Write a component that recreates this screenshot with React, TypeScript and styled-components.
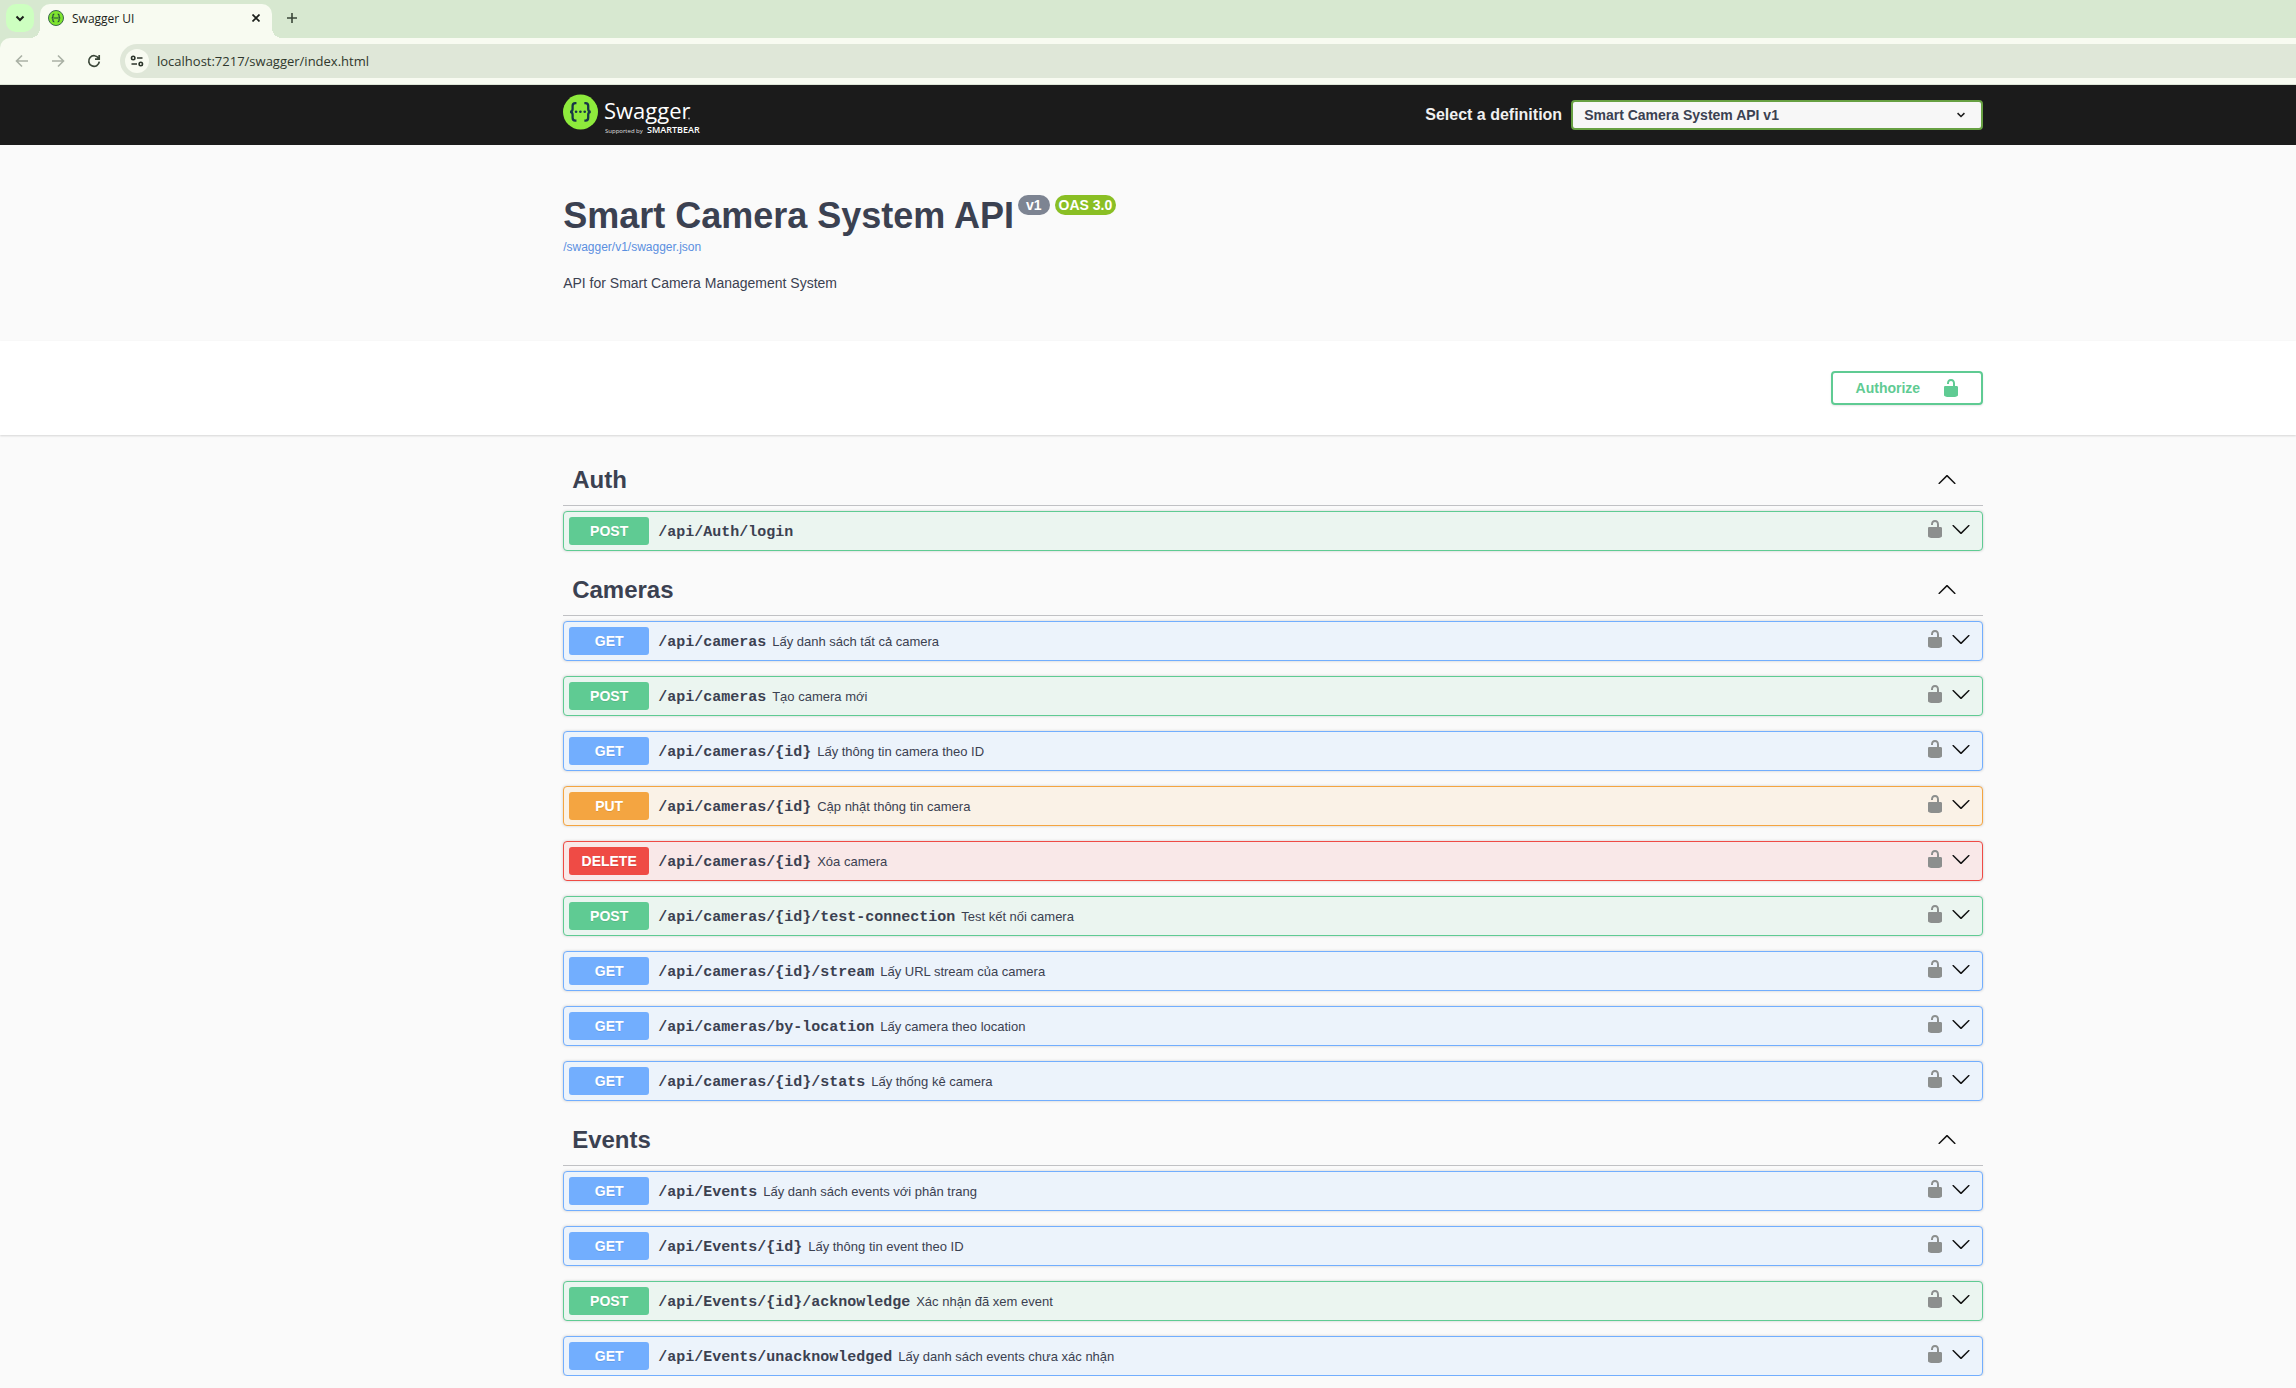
import React, { useState } from "react";
import styled, { createGlobalStyle } from "styled-components";

const GlobalStyle = createGlobalStyle`
  *, *::before, *::after { box-sizing: border-box; }
  body {
    margin: 0;
    background: #fafafa;
    color: #3b4151;
    font-family: "Liberation Sans", Arial, sans-serif;
  }
  button { font: inherit; color: inherit; background: none; border: 0; padding: 0; cursor: pointer; }
  svg { display: block; flex: none; }
  h1, h2, p { margin: 0; }
`;

/* ---------- browser frame ---------- */

const chrome = {
  strip: "#d7e8d0",
  surface: "#f8fbf1",
  field: "#dfe7d8",
  ink: "#1b1f1a",
};

const TabStrip = styled.div`
  display: flex;
  align-items: flex-start;
  height: 38px;
  padding: 4px 6px 0;
  background: ${chrome.strip};
  font-family: "Open Sans", "Noto Sans", sans-serif;
`;

const TabSearch = styled.button`
  display: grid;
  place-items: center;
  width: 28px;
  height: 28px;
  margin-right: 6px;
  border-radius: 10px;
  background: #cdffc0;
`;

const Tab = styled.div`
  position: relative;
  display: flex;
  align-items: center;
  width: 232px;
  height: 34px;
  padding: 0 12px 6px 8px;
  border-radius: 10px 10px 0 0;
  background: ${chrome.surface};
  color: ${chrome.ink};
  font-size: 12px;
  line-height: 16px;

  &::before,
  &::after {
    content: "";
    position: absolute;
    bottom: 0;
    width: 10px;
    height: 10px;
  }
  &::before {
    left: -10px;
    background: radial-gradient(circle at 0 0, transparent 10px, ${chrome.surface} 10px);
  }
  &::after {
    right: -10px;
    background: radial-gradient(circle at 100% 0, transparent 10px, ${chrome.surface} 10px);
  }
`;

const TabTitle = styled.span`
  flex: 1;
  padding: 2px 0 0 8px;
`;

const NewTab = styled.button`
  display: grid;
  place-items: center;
  width: 28px;
  height: 28px;
  margin-left: 6px;
`;

const ToolbarWrap = styled.div`
  background: ${chrome.strip};
`;

const Toolbar = styled.div`
  display: flex;
  align-items: center;
  height: 47px;
  padding: 0 0 1px 8px;
  border-bottom: 1px solid #dde5d6;
  border-radius: 10px 0 0 0;
  background: ${chrome.surface};
`;

const NavButton = styled.button<{ $dim?: boolean }>`
  display: grid;
  place-items: center;
  width: 28px;
  height: 28px;
  margin-right: 8px;
  color: ${(p) => (p.$dim ? "#aab1a5" : "#3a4638")};
`;

const AddressBar = styled.label`
  display: flex;
  flex: 1;
  align-items: center;
  height: 34px;
  margin-left: 4px;
  padding-left: 5px;
  border-radius: 17px 0 0 17px;
  background: ${chrome.field};
`;

const SiteInfo = styled.span`
  display: grid;
  place-items: center;
  width: 24px;
  height: 24px;
  margin-right: 8px;
  border-radius: 50%;
  background: ${chrome.surface};
`;

const AddressInput = styled.input`
  flex: 1;
  min-width: 0;
  padding: 0;
  border: 0;
  outline: 0;
  background: none;
  color: #2f382d;
  font: 13px/20px "Open Sans", "Noto Sans", sans-serif;
`;

/* ---------- page ---------- */

const Columns = styled.div`
  display: grid;
  grid-template-columns: minmax(20px, 9fr) minmax(0, 1420px) minmax(20px, 5fr);
  & > * { grid-column: 2; }
`;

const Topbar = styled(Columns)`
  background: #1b1b1b;
`;

const TopbarInner = styled.div`
  display: flex;
  align-items: center;
  justify-content: space-between;
  height: 60px;
`;

const LogoLink = styled.a`
  display: block;
`;

const DefinitionLabel = styled.label`
  display: flex;
  align-items: center;
  gap: 9px;
  color: #f0f0f0;
  font-size: 16px;
  font-weight: 700;
`;

const SelectBox = styled.span`
  position: relative;
  display: block;
  width: 412px;

  svg {
    position: absolute;
    top: 10px;
    right: 17px;
    pointer-events: none;
  }
`;

const Select = styled.select`
  display: block;
  width: 100%;
  height: 30px;
  padding: 0 40px 0 11px;
  border: 2px solid #67a042;
  border-radius: 4px;
  background: #f7f7f7;
  color: #3b4151;
  font: 700 14px/16px "Liberation Sans", Arial, sans-serif;
  appearance: none;
`;

const InfoInner = styled.header`
  padding: 50px 0;
`;

const TitleRow = styled.div`
  display: flex;
  align-items: flex-start;
`;

const Title = styled.h1`
  margin-right: 4px;
  font-size: 36px;
  line-height: 41px;
  font-weight: 700;
`;

const Badge = styled.span<{ $green?: boolean }>`
  height: 20px;
  margin-right: 5px;
  padding: 0 ${(p) => (p.$green ? 4 : 8)}px;
  border-radius: 10px;
  background: ${(p) => (p.$green ? "#8abf24" : "#7d8492")};
  color: #fff;
  font-size: 14px;
  line-height: 20px;
  font-weight: 700;
`;

const SpecLink = styled.a`
  display: block;
  margin-top: 4px;
  color: #5a8fe0;
  font-size: 12px;
  line-height: 14px;
  text-decoration: none;
`;

const Description = styled.p`
  margin-top: 21px;
  font-size: 14px;
  line-height: 16px;
`;

const Schemes = styled(Columns)`
  background: #fff;
  box-shadow: 0 1px 2px rgba(0, 0, 0, 0.15);
`;

const SchemesInner = styled.div`
  display: flex;
  justify-content: flex-end;
  padding: 30px 0;
`;

const Authorize = styled.button`
  display: flex;
  align-items: center;
  gap: 21px;
  height: 34px;
  padding: 0 20px 0 23px;
  border: 2px solid #5fcb93;
  border-radius: 4px;
  box-shadow: 0 1px 2px rgba(0, 0, 0, 0.1);
  color: #5fcb93;
  font-size: 14px;
  line-height: 16px;
  font-weight: 700;
`;

const Sections = styled.main`
  display: flex;
  flex-direction: column;
  gap: 15px;
  padding-top: 21px;
`;

const SectionHead = styled.button`
  display: flex;
  align-items: center;
  justify-content: space-between;
  width: 100%;
  height: 50px;
  margin-bottom: 5px;
  padding: 0 26px 2px 9px;
  border-bottom: 1px solid #c0c1c4;
  text-align: left;

  svg { margin-bottom: 2px; }
`;

const SectionTitle = styled.h2`
  font-size: 24px;
  line-height: 28px;
  font-weight: 700;
`;

const Operations = styled.div`
  display: flex;
  flex-direction: column;
  gap: 15px;
`;

const palette = {
  GET: { solid: "#72aefe", tint: "#ecf3fb" },
  POST: { solid: "#5fcb93", tint: "#ebf5f0" },
  PUT: { solid: "#f4a541", tint: "#faf2e7" },
  DELETE: { solid: "#ef4b45", tint: "#f9e8e8" },
};
type Method = keyof typeof palette;

const Operation = styled.div<{ $method: Method }>`
  display: flex;
  align-items: center;
  height: 40px;
  padding: 0 11px 0 5px;
  border: 1px solid ${(p) => palette[p.$method].solid};
  border-radius: 4px;
  background: ${(p) => palette[p.$method].tint};
  box-shadow: 0 0 3px rgba(0, 0, 0, 0.19);
`;

const Summary = styled.button`
  display: flex;
  flex: 1;
  align-items: center;
  min-width: 0;
  text-align: left;
`;

const MethodTag = styled.span<{ $method: Method }>`
  width: 80px;
  border-radius: 3px;
  background: ${(p) => palette[p.$method].solid};
  color: #fff;
  font-size: 14px;
  line-height: 28px;
  font-weight: 700;
  text-align: center;
  text-shadow: 0 1px 0 rgba(0, 0, 0, 0.1);
`;

const Path = styled.span`
  padding: 4px 6px 0 9px;
  font-family: "Liberation Mono", monospace;
  font-size: 15px;
  line-height: 18px;
  font-weight: 700;
`;

const Note = styled.span`
  padding-top: 2px;
  font-size: 13px;
  line-height: 16px;
`;

const IconButton = styled.button<{ $lock?: boolean }>`
  margin: 0 ${(p) => (p.$lock ? 6 : 0)}px 5px 0;
  color: ${(p) => (p.$lock ? "#8c8f8e" : "#111")};
`;

const sections: { name: string; operations: [Method, string, string][] }[] = [
  { name: "Auth", operations: [["POST", "/api/Auth/login", ""]] },
  {
    name: "Cameras",
    operations: [
      ["GET", "/api/cameras", "Lấy danh sách tất cả camera"],
      ["POST", "/api/cameras", "Tạo camera mới"],
      ["GET", "/api/cameras/{id}", "Lấy thông tin camera theo ID"],
      ["PUT", "/api/cameras/{id}", "Cập nhật thông tin camera"],
      ["DELETE", "/api/cameras/{id}", "Xóa camera"],
      ["POST", "/api/cameras/{id}/test-connection", "Test kết nối camera"],
      ["GET", "/api/cameras/{id}/stream", "Lấy URL stream của camera"],
      ["GET", "/api/cameras/by-location", "Lấy camera theo location"],
      ["GET", "/api/cameras/{id}/stats", "Lấy thống kê camera"],
    ],
  },
  {
    name: "Events",
    operations: [
      ["GET", "/api/Events", "Lấy danh sách events với phân trang"],
      ["GET", "/api/Events/{id}", "Lấy thông tin event theo ID"],
      ["POST", "/api/Events/{id}/acknowledge", "Xác nhận đã xem event"],
      ["GET", "/api/Events/unacknowledged", "Lấy danh sách events chưa xác nhận"],
    ],
  },
];

const Unlocked = () => (
  <svg width="20" height="20" viewBox="0 0 20 20" fill="currentColor" aria-hidden="true">
    <path d="M15.8 8H14V5.6C14 2.703 12.665 1 10 1 7.334 1 6 2.703 6 5.6V6h2v-.801C8 3.754 8.797 3 10 3c1.203 0 2 .754 2 2.199V8H4c-.553 0-1 .646-1 1.199V17c0 .549.428 1.139.951 1.307l1.197.387C5.672 18.861 6.55 19 7.1 19h5.8c.549 0 1.428-.139 1.951-.307l1.196-.387c.524-.167.953-.757.953-1.306V9.199C17 8.646 16.352 8 15.8 8z" />
  </svg>
);

const ArrowDown = () => (
  <svg width="20" height="20" viewBox="0 0 20 20" fill="currentColor" aria-hidden="true">
    <path d="M17.418 6.109c.272-.268.709-.268.979 0s.271.701 0 .969l-7.908 7.83c-.27.268-.707.268-.979 0l-7.908-7.83c-.27-.268-.27-.701 0-.969.271-.268.709-.268.979 0L10 13.25l7.418-7.141z" />
  </svg>
);

const ArrowUp = () => (
  <svg width="20" height="20" viewBox="0 0 20 20" fill="#111" aria-hidden="true">
    <path d="M17.418 14.908c.272.268.709.268.979 0s.271-.701 0-.969l-7.908-7.83c-.27-.268-.707-.268-.979 0l-7.908 7.83c-.27.268-.27.701 0 .969.271.268.709.268.979 0L10 7.767l7.418 7.141z" />
  </svg>
);

const Braces = () => (
  <>
    <path
      d="M14.2 10.2h-1c-1.600 0-2.200.9-2.200 2.300v2.600c0 1.500-.7 2.200-2 2.400 1.300.2 2 .9 2 2.400v2.600c0 1.400.6 2.300 2.200 2.300h1M20.800 10.200h1c1.600 0 2.200.9 2.200 2.300v2.600c0 1.500.7 2.200 2 2.400-1.300.2-2 .9-2 2.400v2.600c0 1.400-.6 2.300-2.200 2.300h-1"
      fill="none"
      stroke="#173647"
      strokeWidth="1.900"
    />
    <circle cx="13.900" cy="17.500" r="1.100" fill="#173647" />
    <circle cx="17.500" cy="17.500" r="1.100" fill="#173647" />
    <circle cx="21.100" cy="17.500" r="1.100" fill="#173647" />
  </>
);

const Logo = () => (
  <svg width="145" height="42" viewBox="0 0 145 42" role="img" aria-label="Swagger, supported by SmartBear">
    <circle cx="17.500" cy="18" r="17.500" fill="#8eea3c" />
    <g transform="translate(-3.600 -3.200) scale(1.200)"><Braces /></g>
    <g fill="#fff" fontFamily="'Open Sans', 'Noto Sans', sans-serif">
      <text x="41" y="25" fontSize="22">Swagger</text>
      <circle cx="126" cy="24.500" r="1" opacity="0.600" />
      <text x="42" y="39" fontSize="6" opacity="0.850">Supported by</text>
      <text x="84" y="39" fontSize="9" fontWeight="600">SMARTBEAR</text>
    </g>
  </svg>
);

const Favicon = () => (
  <svg width="16" height="16" viewBox="0 0 16 16" aria-hidden="true">
    <circle cx="8" cy="8" r="7.500" fill="#7fe52e" stroke="#3b6a4c" />
    <path d="M6.300 4.200c-1.300 0-1.400.5-1.400 1.500v1c0 .8-.4 1.200-1.200 1.300.8.1 1.200.5 1.200 1.300v1c0 1 .1 1.500 1.400 1.500M9.700 4.200c1.300 0 1.400.5 1.400 1.500v1c0 .8.4 1.200 1.200 1.300-.8.1-1.200.5-1.200 1.300v1c0 1-.1 1.500-1.400 1.500M5.500 8h5" fill="none" stroke="#244a3c" strokeWidth="1.200" />
  </svg>
);

const LineIcon = ({ d, size = 16, weight = 2, color = "currentColor" }: { d: string; size?: number; weight?: number; color?: string }) => (
  <svg width={size} height={size} viewBox="0 0 16 16" fill="none" stroke={color} strokeWidth={weight} aria-hidden="true">
    <path d={d} />
  </svg>
);

const Section = ({ name, operations }: (typeof sections)[number]) => {
  const [open, setOpen] = useState(true);
  return (
    <section>
      <SectionHead type="button" aria-expanded={open} onClick={() => setOpen(!open)}>
        <SectionTitle>{name}</SectionTitle>
        {open ? <ArrowUp /> : <ArrowDown />}
      </SectionHead>
      {open && (
        <Operations>
          {operations.map(([method, path, note]) => (
            <Operation key={method + path} $method={method}>
              <Summary type="button">
                <MethodTag $method={method}>{method}</MethodTag>
                <Path>{path}</Path>
                {note && <Note>{note}</Note>}
              </Summary>
              <IconButton $lock type="button" aria-label="Authorization"><Unlocked /></IconButton>
              <IconButton type="button" aria-label="Expand operation"><ArrowDown /></IconButton>
            </Operation>
          ))}
        </Operations>
      )}
    </section>
  );
};

export default function App() {
  const [url, setUrl] = useState("localhost:7217/swagger/index.html");
  return (
    <>
      <GlobalStyle />
      <TabStrip>
        <TabSearch type="button" aria-label="Search tabs">
          <LineIcon d="M4.500 6.500 8 10l3.500-3.500" color={chrome.ink} />
        </TabSearch>
        <Tab>
          <Favicon />
          <TabTitle>Swagger UI</TabTitle>
          <button type="button" aria-label="Close tab">
            <svg width="8" height="8" viewBox="0 0 8 8" stroke={chrome.ink} strokeWidth="1.700" aria-hidden="true">
              <path d="m.5.5 7 7M7.500.5l-7 7" />
            </svg>
          </button>
        </Tab>
        <NewTab type="button" aria-label="New tab">
          <LineIcon d="M8 3v10M3 8h10" weight={1.6} color="#3a4638" />
        </NewTab>
      </TabStrip>
      <ToolbarWrap>
        <Toolbar>
          <NavButton $dim type="button" aria-label="Back">
            <LineIcon d="M14 8H3M8 2.500 2.500 8 8 13.500" weight={1.6} />
          </NavButton>
          <NavButton $dim type="button" aria-label="Forward">
            <LineIcon d="M2 8h11M8 2.500 13.500 8 8 13.500" weight={1.6} />
          </NavButton>
          <NavButton type="button" aria-label="Reload">
            <LineIcon d="M12.600 5.300A5.300 5.300 0 1 0 13.300 8.700M13.200 2v4.200H9" weight={1.7} />
          </NavButton>
          <AddressBar>
            <SiteInfo>
              <svg width="14" height="14" viewBox="0 0 14 14" fill="none" stroke="#2c362b" strokeWidth="1.600" aria-hidden="true">
                <circle cx="3.200" cy="4" r="1.700" />
                <path d="M7 4h5.500M1.500 10H7" />
                <circle cx="10.800" cy="10" r="1.700" />
              </svg>
            </SiteInfo>
            <AddressInput aria-label="Address" value={url} onChange={(e) => setUrl(e.target.value)} />
          </AddressBar>
        </Toolbar>
      </ToolbarWrap>

      <Topbar>
        <TopbarInner>
          <LogoLink href="#"><Logo /></LogoLink>
          <DefinitionLabel>
            Select a definition
            <SelectBox>
              <Select defaultValue="v1">
                <option value="v1">Smart Camera System API v1</option>
              </Select>
              <LineIcon d="M2.500 5 8 10.500 13.500 5" size={10} weight={2.4} color="#1b1b1b" />
            </SelectBox>
          </DefinitionLabel>
        </TopbarInner>
      </Topbar>

      <Columns>
        <InfoInner>
          <TitleRow>
            <Title>Smart Camera System API</Title>
            <Badge>v1</Badge>
            <Badge $green>OAS 3.0</Badge>
          </TitleRow>
          <SpecLink href="/swagger/v1/swagger.json">/swagger/v1/swagger.json</SpecLink>
          <Description>API for Smart Camera Management System</Description>
        </InfoInner>
      </Columns>

      <Schemes>
        <SchemesInner>
          <Authorize type="button">
            Authorize
            <Unlocked />
          </Authorize>
        </SchemesInner>
      </Schemes>

      <Columns>
        <Sections>
          {sections.map((section) => (
            <Section key={section.name} {...section} />
          ))}
        </Sections>
      </Columns>
    </>
  );
}
